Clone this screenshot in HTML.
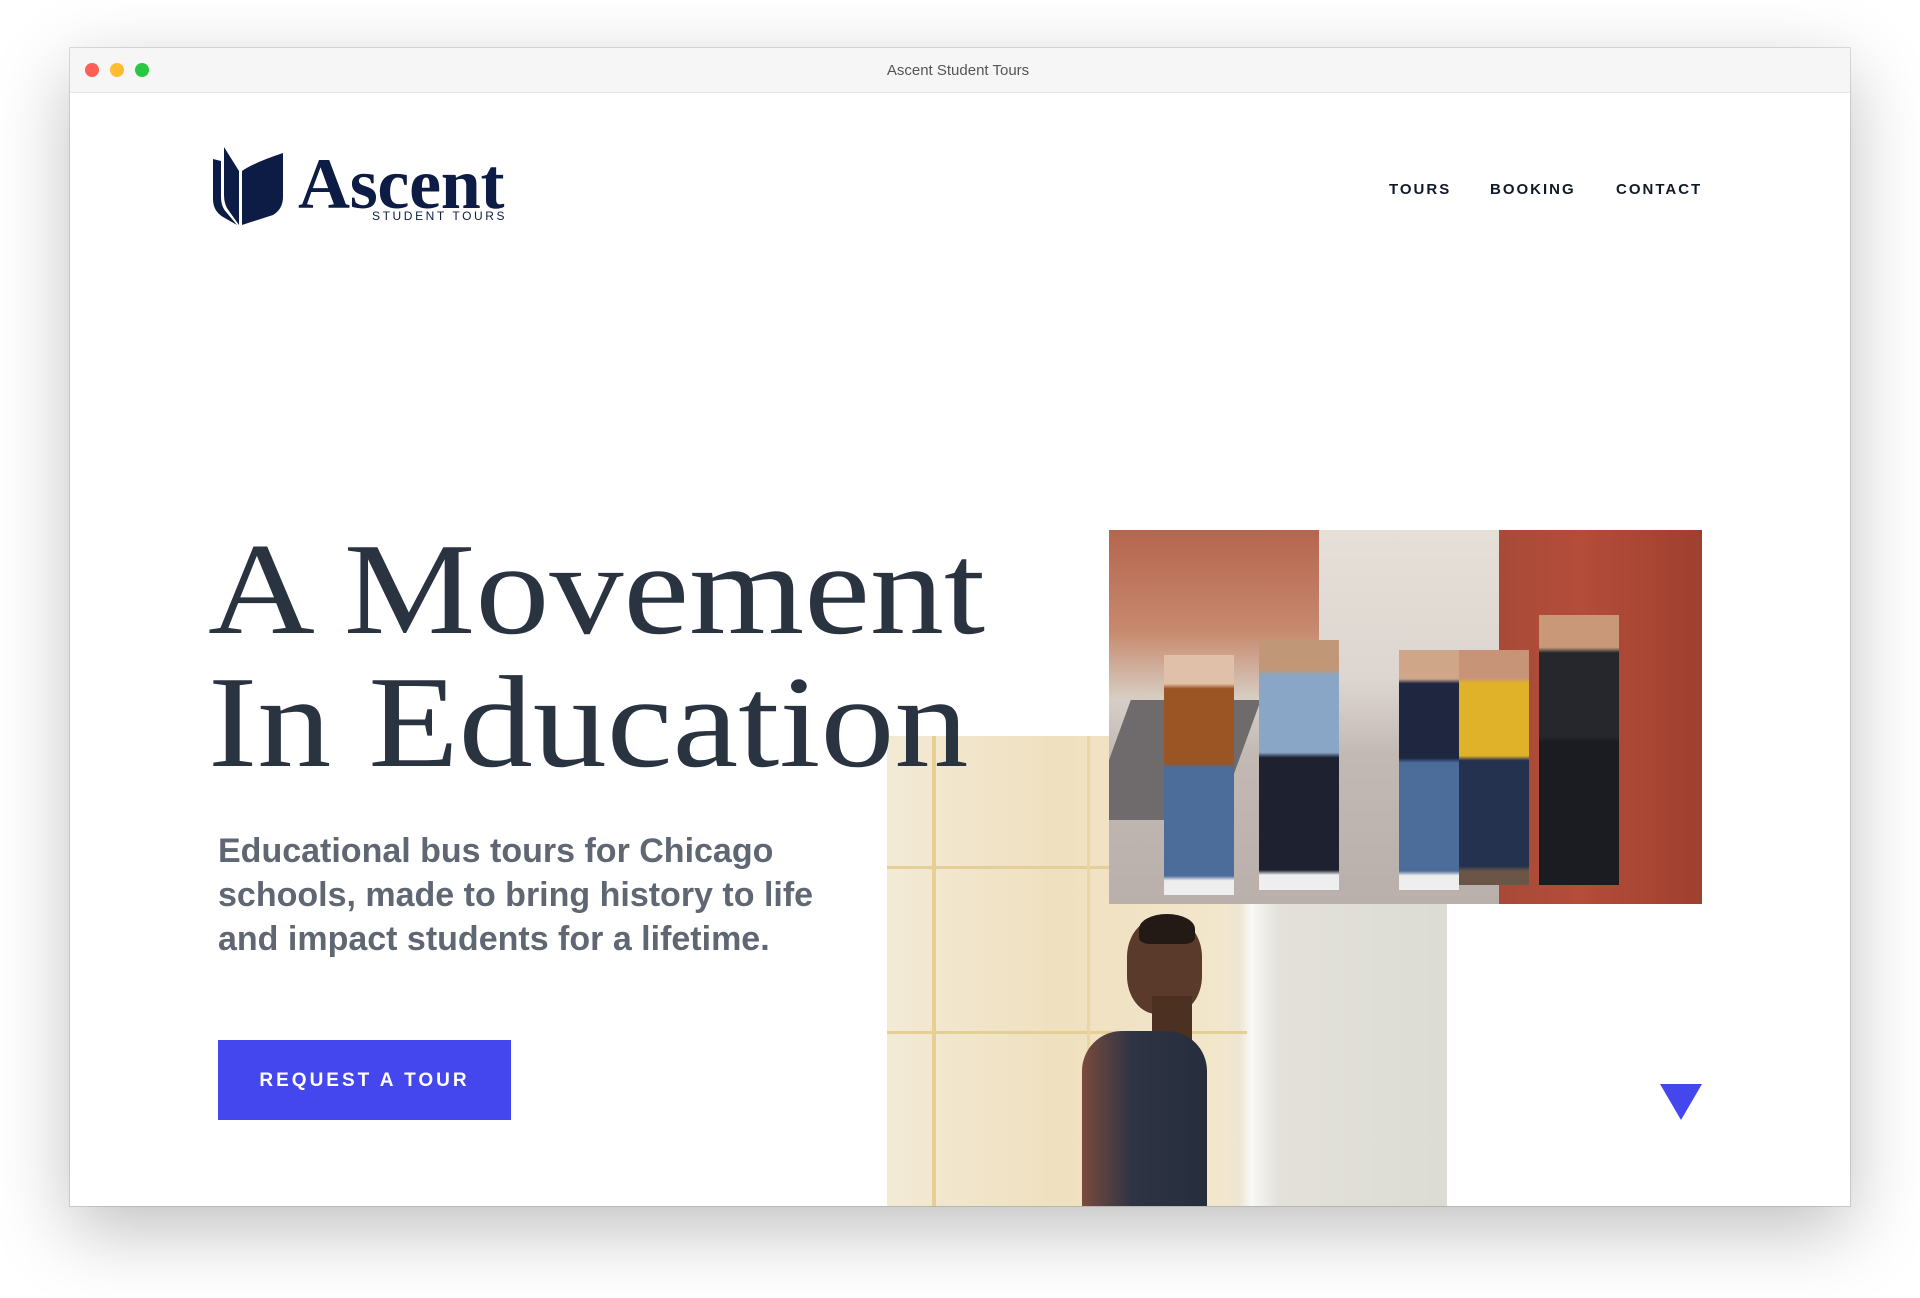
<!DOCTYPE html>
<html><head><meta charset="utf-8"><style>
*{margin:0;padding:0;box-sizing:border-box}
body{width:1920px;height:1298px;background:#fff;position:relative;overflow:hidden;font-family:"Liberation Sans",sans-serif}
.win{position:absolute;left:70px;top:48px;width:1780px;height:1158px;background:#fff;box-shadow:0 24px 70px rgba(0,0,0,.25),0 0 0 1px rgba(0,0,0,.12);overflow:hidden}
.bar{position:absolute;left:0;top:0;width:100%;height:45px;background:#f6f6f6;border-bottom:1px solid #e6e6e6}
.dot{position:absolute;top:15px;width:14px;height:14px;border-radius:50%}
.ttl{position:absolute;left:0;width:100%;top:14px;text-align:center;font-size:15px;color:#555}
.a{position:absolute}
.nav{position:absolute;top:181px;font-size:15px;font-weight:bold;letter-spacing:2px;color:#111827}
</style></head><body>
<div class="win">
<div class="bar">
<div class="dot" style="left:15px;background:#fe5f57"></div>
<div class="dot" style="left:40px;background:#febc2e"></div>
<div class="dot" style="left:65px;background:#28c840"></div>
<div class="ttl" style="left:-2px">Ascent Student Tours</div>
</div>
</div>
<!-- logo -->
<svg class="a" style="left:213px;top:147px" width="72" height="78" viewBox="0 0 72 78">
<path d="M0 12 L8 14 L8 50 Q8 60 14 66 L24 78 L10 70 Q0 64 0 52Z" fill="#0c1c44"/>
<path d="M11 0 L26 24 L26 78 L16 64 Q11 58 11 48Z" fill="#0c1c44"/>
<path d="M29 24 Q40 16 70 6 L70 50 Q70 62 60 68 L29 78Z" fill="#0c1c44"/>
</svg>
<div class="a" style="left:298px;top:148px;font-family:'Liberation Serif',serif;font-weight:bold;font-size:72px;line-height:72px;letter-spacing:-0.3px;color:#0c1c44">Ascent</div>
<div class="a" style="left:372px;top:210px;font-size:12px;line-height:13px;letter-spacing:2.6px;color:#0c1c44">STUDENT TOURS</div>
<div class="nav" style="left:1389px">TOURS</div>
<div class="nav" style="left:1490px">BOOKING</div>
<div class="nav" style="left:1616px">CONTACT</div>
<!-- man photo -->
<div class="a" style="left:887px;top:736px;width:560px;height:470px;background:linear-gradient(90deg,#f3ead6 0,#efe0bf 30%,#f2e6cc 60%,#eee6d4 63%,#f8f8f6 65%,#e3e1da 70%,#dcdbd4 100%);overflow:hidden">
<div class="a" style="left:45px;top:0;width:4px;height:470px;background:#e7cf92"></div>
<div class="a" style="left:0;top:130px;width:360px;height:3px;background:#e6cf96"></div>
<div class="a" style="left:0;top:295px;width:360px;height:3px;background:#e6cf96"></div>
<div class="a" style="left:200px;top:0;width:3px;height:470px;background:#e9d6a4"></div>
<div class="a" style="left:240px;top:183px;width:75px;height:95px;border-radius:40%;background:#5a3a2a"></div>
<div class="a" style="left:252px;top:178px;width:56px;height:30px;border-radius:50% 50% 20% 20%;background:#231a16"></div>
<div class="a" style="left:265px;top:260px;width:40px;height:50px;background:#4c3022"></div>
<div class="a" style="left:195px;top:295px;width:125px;height:175px;border-radius:40px 40px 0 0;background:linear-gradient(90deg,#7a4a3c,#2e3444 40%,#262d3c)"></div>
</div>
<!-- group photo -->
<div class="a" style="left:1109px;top:530px;width:593px;height:374px;background:linear-gradient(180deg,#e6dfd8 0,#ddd6d0 40%,#c3b9b4 60%,#b9afab 100%);overflow:hidden">
<div class="a" style="left:0;top:0;width:210px;height:170px;background:linear-gradient(180deg,#b5654e,#c78a6f 60%,#d7cfc4)"></div>
<div class="a" style="left:390px;top:0;width:203px;height:374px;background:linear-gradient(90deg,#a84a38,#b44d3a 40%,#9f3f2e)"></div>
<div class="a" style="left:0;top:170px;width:130px;height:120px;background:#6f6a6c;transform:skewX(-20deg)"></div>
<div class="a" style="left:55px;top:125px;width:70px;height:240px;background:linear-gradient(180deg,#e0c0a8 0,#e0c0a8 12%,#9b5424 14%,#9b5424 45%,#4c6c9a 47%,#4c6c9a 92%,#eee 94%)"></div>
<div class="a" style="left:150px;top:110px;width:80px;height:250px;background:linear-gradient(180deg,#c09878 0,#c09878 12%,#8aa6c6 14%,#8aa6c6 45%,#1e2230 47%,#1e2230 92%,#eee 94%)"></div>
<div class="a" style="left:290px;top:120px;width:60px;height:240px;background:linear-gradient(180deg,#d0a688 0,#d0a688 12%,#1f2640 14%,#1f2640 45%,#4c6c9a 47%,#4c6c9a 92%,#eee 94%)"></div>
<div class="a" style="left:350px;top:120px;width:70px;height:235px;background:linear-gradient(180deg,#c89478 0,#c89478 12%,#e0b22a 14%,#e0b22a 45%,#243250 47%,#243250 92%,#6a5546 94%)"></div>
<div class="a" style="left:430px;top:85px;width:80px;height:270px;background:linear-gradient(180deg,#c89878 0,#c89878 12%,#25272c 14%,#25272c 45%,#1b1c22 47%)"></div>
</div>
<div class="a" style="left:208px;top:523px;font-family:'Liberation Serif',serif;font-size:131px;line-height:133px;color:#2a3340;white-space:nowrap;transform:scaleX(1.13);transform-origin:0 0">A Movement<br>In Education</div>
<div class="a" style="left:218px;top:829px;font-size:34px;line-height:44px;font-weight:bold;color:#5f6773;white-space:nowrap">Educational bus tours for Chicago<br>schools, made to bring history to life<br>and impact students for a lifetime.</div>
<div class="a" style="left:218px;top:1040px;width:293px;height:80px;background:#4447ee;color:#fff;font-weight:bold;font-size:19px;letter-spacing:3px;text-align:center;line-height:82px">REQUEST A TOUR</div>
<svg class="a" style="left:1660px;top:1084px" width="42" height="36"><path d="M0 0H42L21 36Z" fill="#4447ee"/></svg>
</body></html>
